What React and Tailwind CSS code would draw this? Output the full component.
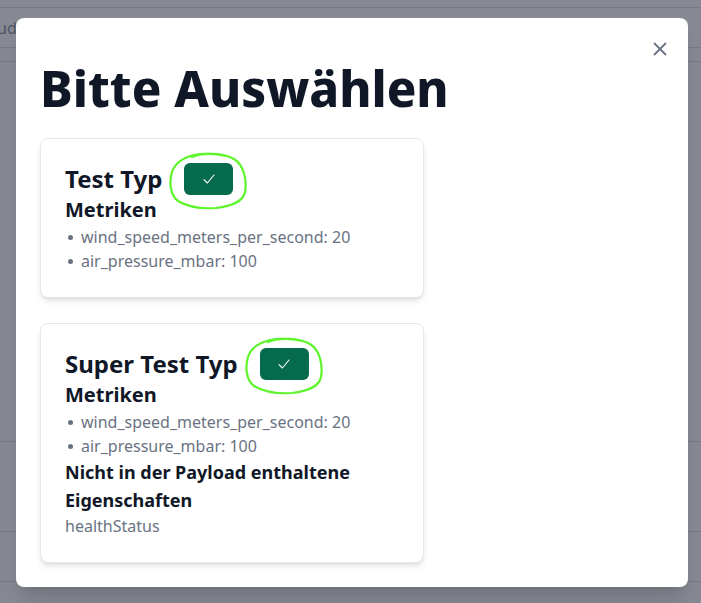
import React from 'react';

const font = { fontFamily: '"Noto Sans", "Open Sans", sans-serif' };

const Scribble = () => (
  <svg
    className="absolute -left-[16px] -top-[11px] pointer-events-none"
    width="80"
    height="58"
    viewBox="0 0 80 58"
    fill="none"
  >
    <path
      d="M24 5 C 34 0, 56 1, 66 7 C 76 13, 79 28, 77 40 C 75 50, 64 54, 48 56 C 34 57, 20 55, 10 49 C 2 43, 1 30, 4 20 C 7 11, 14 6, 26 3 C 36 1, 50 2, 58 4"
      stroke="#5ef52c"
      strokeWidth="2.2"
      strokeLinecap="round"
    />
  </svg>
);

const CheckButton = () => (
  <div className="relative ml-[22px]">
    <Scribble />
    <button className="relative flex h-8 w-[49px] items-center justify-center rounded-md bg-[#066b4c]">
      <svg width="16" height="16" viewBox="0 0 16 16" fill="none">
        <path d="M3 8.6 L6.4 12 L13 4" stroke="white" strokeWidth="1.1" strokeLinecap="round" strokeLinejoin="round" />
      </svg>
    </button>
  </div>
);

const TypeCard = ({ name, metrics, missing }) => (
  <div className="w-96 rounded-lg border border-gray-200 bg-white p-6 shadow-md">
    <div className="flex h-8 items-center">
      <h2 className="text-2xl font-bold leading-8 text-gray-900">{name}</h2>
      <CheckButton />
    </div>
    <h3 className="mt-px text-xl font-bold leading-7 text-gray-900">Metriken</h3>
    <ul className="mt-px text-base leading-6 text-gray-500">
      {metrics.map((m) => (
        <li key={m} className="flex items-center">
          <span className="ml-[3px] mr-[8px] h-[5px] w-[5px] rounded-full bg-gray-500" />
          {m}
        </li>
      ))}
    </ul>
    {missing && (
      <>
        <h3 className="text-lg font-bold leading-7 text-gray-900">Nicht in der Payload enthaltene Eigenschaften</h3>
        <p className="text-base leading-6 text-gray-500">{missing}</p>
      </>
    )}
  </div>
);

export default function App() {
  const metrics = ['wind_speed_meters_per_second: 20', 'air_pressure_mbar: 100'];

  return (
    <div className="relative h-[603px] w-[701px] overflow-hidden bg-[#868892]" style={font}>
      {/* page behind the overlay */}
      <div className="h-2 border-b border-[#777984]" />
      <div className="flex h-10 items-center border-b border-[#777984] text-base text-[#4f5564]">
        <span className="-ml-[3px]">ude</span>
      </div>
      <div className="h-[14px] border-b border-[#777984]" />
      <div className="h-[380px] border-b border-[#777984]" />
      <div className="h-[90px] border-b border-[#777984]" />
      <div className="h-[50px] border-b border-[#777984]" />

      {/* modal */}
      <div className="absolute left-4 top-[18px] w-[672px] rounded-lg bg-white px-6 pb-6 pt-[34px] shadow-xl">
        <button className="absolute right-[17px] top-[20px] p-1 text-gray-500">
          <svg width="14" height="14" viewBox="0 0 14 14" fill="none">
            <path d="M1.5 1.5 L12.5 12.5 M12.5 1.5 L1.5 12.5" stroke="currentColor" strokeWidth="1.8" strokeLinecap="round" />
          </svg>
        </button>
        <h1 className="text-[49px] font-extrabold leading-[72px] text-gray-900">Bitte Auswählen</h1>
        <div className="mt-[14px] flex flex-col gap-[25px]">
          <TypeCard name="Test Typ" metrics={metrics} />
          <TypeCard name="Super Test Typ" metrics={metrics} missing="healthStatus" />
        </div>
      </div>
    </div>
  );
}
